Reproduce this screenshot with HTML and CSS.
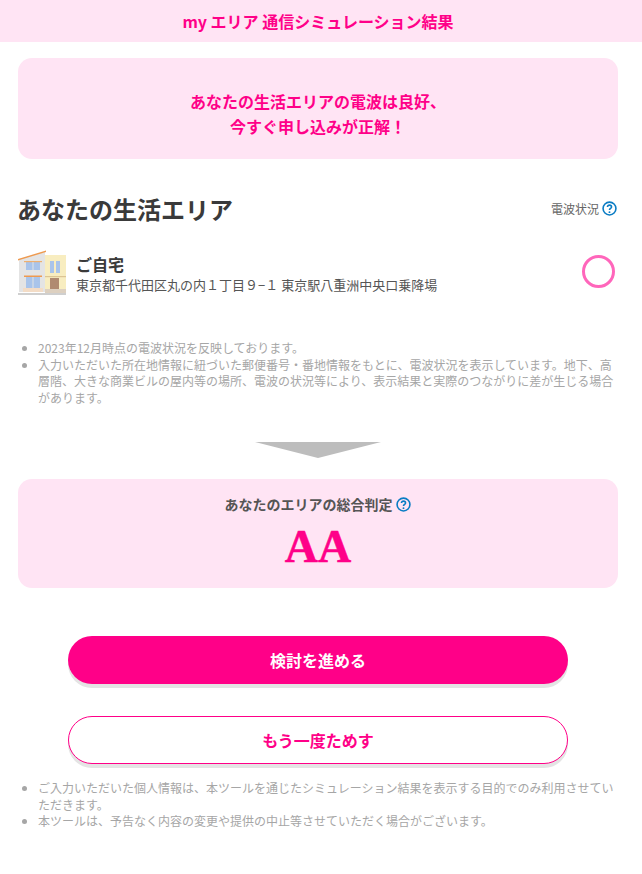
FILE: index.html
```html
<!DOCTYPE html>
<html lang="ja">
<head>
<meta charset="utf-8">
<title>my エリア 通信シミュレーション結果</title>
<link rel="stylesheet" href="styles.css">
</head>
<body>
<header class="top">my エリア 通信シミュレーション結果</header>
<main class="wrap">
  <section class="lead">あなたの生活エリアの電波は良好、<br>今すぐ申し込みが正解！</section>
  <div class="head-row">
    <h1 class="title">あなたの生活エリア</h1>
    <div class="status-link">電波状況
      <svg class="help" viewBox="0 0 14 14"><circle cx="7" cy="7" r="6" fill="none" stroke="#0a7cc4" stroke-width="1.500"/><path d="M5.100 5.600c0-1.100.8-1.800 1.900-1.800s1.900.7 1.900 1.700c0 1.400-1.900 1.400-1.900 2.900" fill="none" stroke="#0a7cc4" stroke-width="1.500"/><circle cx="7" cy="10.400" r=".9" fill="#0a7cc4"/></svg>
    </div>
  </div>
  <div class="place">
    <svg class="house" viewBox="0 0 48 46">
      <rect x="27" y="5" width="21" height="35" fill="#f8edc0"/>
      <path d="M1 9 27 2V42H1z" fill="#e4e4e4"/>
      <path d="M0 9 28 .5V2L0 10.500z" fill="#ee9a50"/>
      <rect x="8" y="12" width="14" height="8" fill="#a9c4ea"/>
      <rect x="6" y="11" width="18" height="1.200" fill="#eeb070"/>
      <rect x="14.500" y="12" width="1" height="8" fill="#e4e4e4"/>
      <rect x="8" y="27" width="14" height="11" fill="#a9c4ea"/>
      <rect x="6" y="25.500" width="18" height="1.500" fill="#ee9a50"/>
      <rect x="14.500" y="27" width="1" height="11" fill="#e4e4e4"/>
      <rect x="5" y="38" width="20" height="4" fill="#f3dcc6"/>
      <rect x="32" y="11" width="4" height="12" fill="#a9c4ea"/>
      <rect x="38" y="11" width="4" height="12" fill="#a9c4ea"/>
      <rect x="27" y="26" width="21" height="1.200" fill="#dcc494"/>
      <rect x="32" y="28" width="9" height="11" fill="#b08a70"/>
      <rect x="27" y="39" width="21" height="4" fill="#ddd0c0"/>
      <rect x="0" y="43" width="48" height="2" fill="#cfcfcf"/>
    </svg>
    <div class="place-text">
      <div class="place-name">ご自宅</div>
      <div class="place-addr">東京都千代田区丸の内１丁目９−１ 東京駅八重洲中央口乗降場</div>
    </div>
    <span class="ring"></span>
  </div>
  <ul class="notes first">
    <li>2023年12月時点の電波状況を反映しております。</li>
    <li>入力いただいた所在地情報に紐づいた郵便番号・番地情報をもとに、電波状況を表示しています。地下、高層階、大きな商業ビルの屋内等の場所、電波の状況等により、表示結果と実際のつながりに差が生じる場合があります。</li>
  </ul>
  <div class="arrow"></div>
  <section class="verdict">
    <div class="verdict-label">あなたのエリアの総合判定
      <svg class="help" viewBox="0 0 14 14"><circle cx="7" cy="7" r="6" fill="none" stroke="#0a7cc4" stroke-width="1.500"/><path d="M5.100 5.600c0-1.100.8-1.800 1.900-1.800s1.900.7 1.900 1.700c0 1.400-1.900 1.400-1.900 2.900" fill="none" stroke="#0a7cc4" stroke-width="1.500"/><circle cx="7" cy="10.400" r=".9" fill="#0a7cc4"/></svg>
    </div>
    <div class="grade">AA</div>
  </section>
  <div class="actions">
    <a class="btn primary">検討を進める</a>
    <a class="btn secondary">もう一度ためす</a>
  </div>
  <ul class="notes">
    <li>ご入力いただいた個人情報は、本ツールを通じたシミュレーション結果を表示する目的でのみ利用させていただきます。</li>
    <li>本ツールは、予告なく内容の変更や提供の中止等させていただく場合がございます。</li>
  </ul>
</main>
</body>
</html>
```
FILE: styles.css
```css
* { box-sizing: border-box; }
html, body { margin: 0; padding: 0; background: #fff; }
body { font-family: "Noto Sans CJK JP", "Noto Sans", sans-serif; color: #333; overflow: hidden; height: 874px; }
.top { height: 42px; background: #ffe4f4; color: #ff0088; font-weight: 700; font-size: 16px; line-height: 42px; text-align: center; padding-right: 6px; }
.wrap { padding: 16px 18px 0 18px; width: 636px; }
.lead { height: 101px; background: #ffe4f4; border-radius: 14px; color: #ff0088; font-weight: 700; font-size: 16px; line-height: 25px; text-align: center; padding-top: 31px; }
.head-row { display: flex; justify-content: space-between; align-items: center; margin-top: 31px; height: 38px; }
.title { margin: 0 0 0 -1px; font-size: 24px; font-weight: 700; line-height: 38px; color: #3a3a3a; }
.status-link { display: flex; align-items: center; gap: 3px; font-size: 12px; color: #666; margin-top: -2px; padding-right: 1px; }
.help { width: 15px; height: 15px; display: block; }
.place { display: flex; align-items: center; margin-top: 22px; height: 46px; position: relative; }
.house { width: 48px; height: 46px; flex: none; }
.place-text { margin-left: 10px; flex: 1; padding-top: 2px; }
.place-name { font-size: 16px; font-weight: 700; line-height: 22px; color: #3a3a3a; }
.place-addr { font-size: 13px; line-height: 20px; color: #555; }
.ring { width: 33px; height: 33px; border: 3.500px solid #ff66bb; border-radius: 50%; flex: none; margin: -4px 3px 0 0; }
.notes { margin: 0; padding: 0 0 0 20px; font-size: 12px; line-height: 16.500px; color: #a6a6a6; }
.notes li::marker { color: #a6a6a6; }
.notes.first { margin-top: 44px; }
.arrow { width: 126px; height: 16px; margin: 36px auto 0; background: #bdbdbd; clip-path: polygon(0 0, 100% 0, 50% 100%); }
.verdict { height: 109px; margin-top: 21px; background: #ffe4f4; border-radius: 14px; text-align: center; padding-top: 14px; }
.verdict-label { display: flex; justify-content: center; align-items: center; gap: 3px; font-size: 14px; font-weight: 700; line-height: 22px; color: #555; padding-right: 1px; }
.grade { font-family: "Liberation Serif", serif; font-weight: 700; font-size: 46px; line-height: 50px; color: #ff0088; margin-top: 7px; -webkit-text-stroke: 0.5px #ff0088; }
.actions { display: flex; flex-direction: column; align-items: center; gap: 32px; margin-top: 48px; }
.btn { display: block; width: 500px; height: 48px; border-radius: 24px; font-size: 16px; font-weight: 700; line-height: 48px; text-align: center; box-shadow: 0 4px 0 #e4e4e4; }
.primary { background: #ff0088; color: #fff; }
.secondary { background: #fff; color: #ff0088; border: 1px solid #ff0088; line-height: 46px; }
.actions + .notes { margin-top: 16px; }
```
